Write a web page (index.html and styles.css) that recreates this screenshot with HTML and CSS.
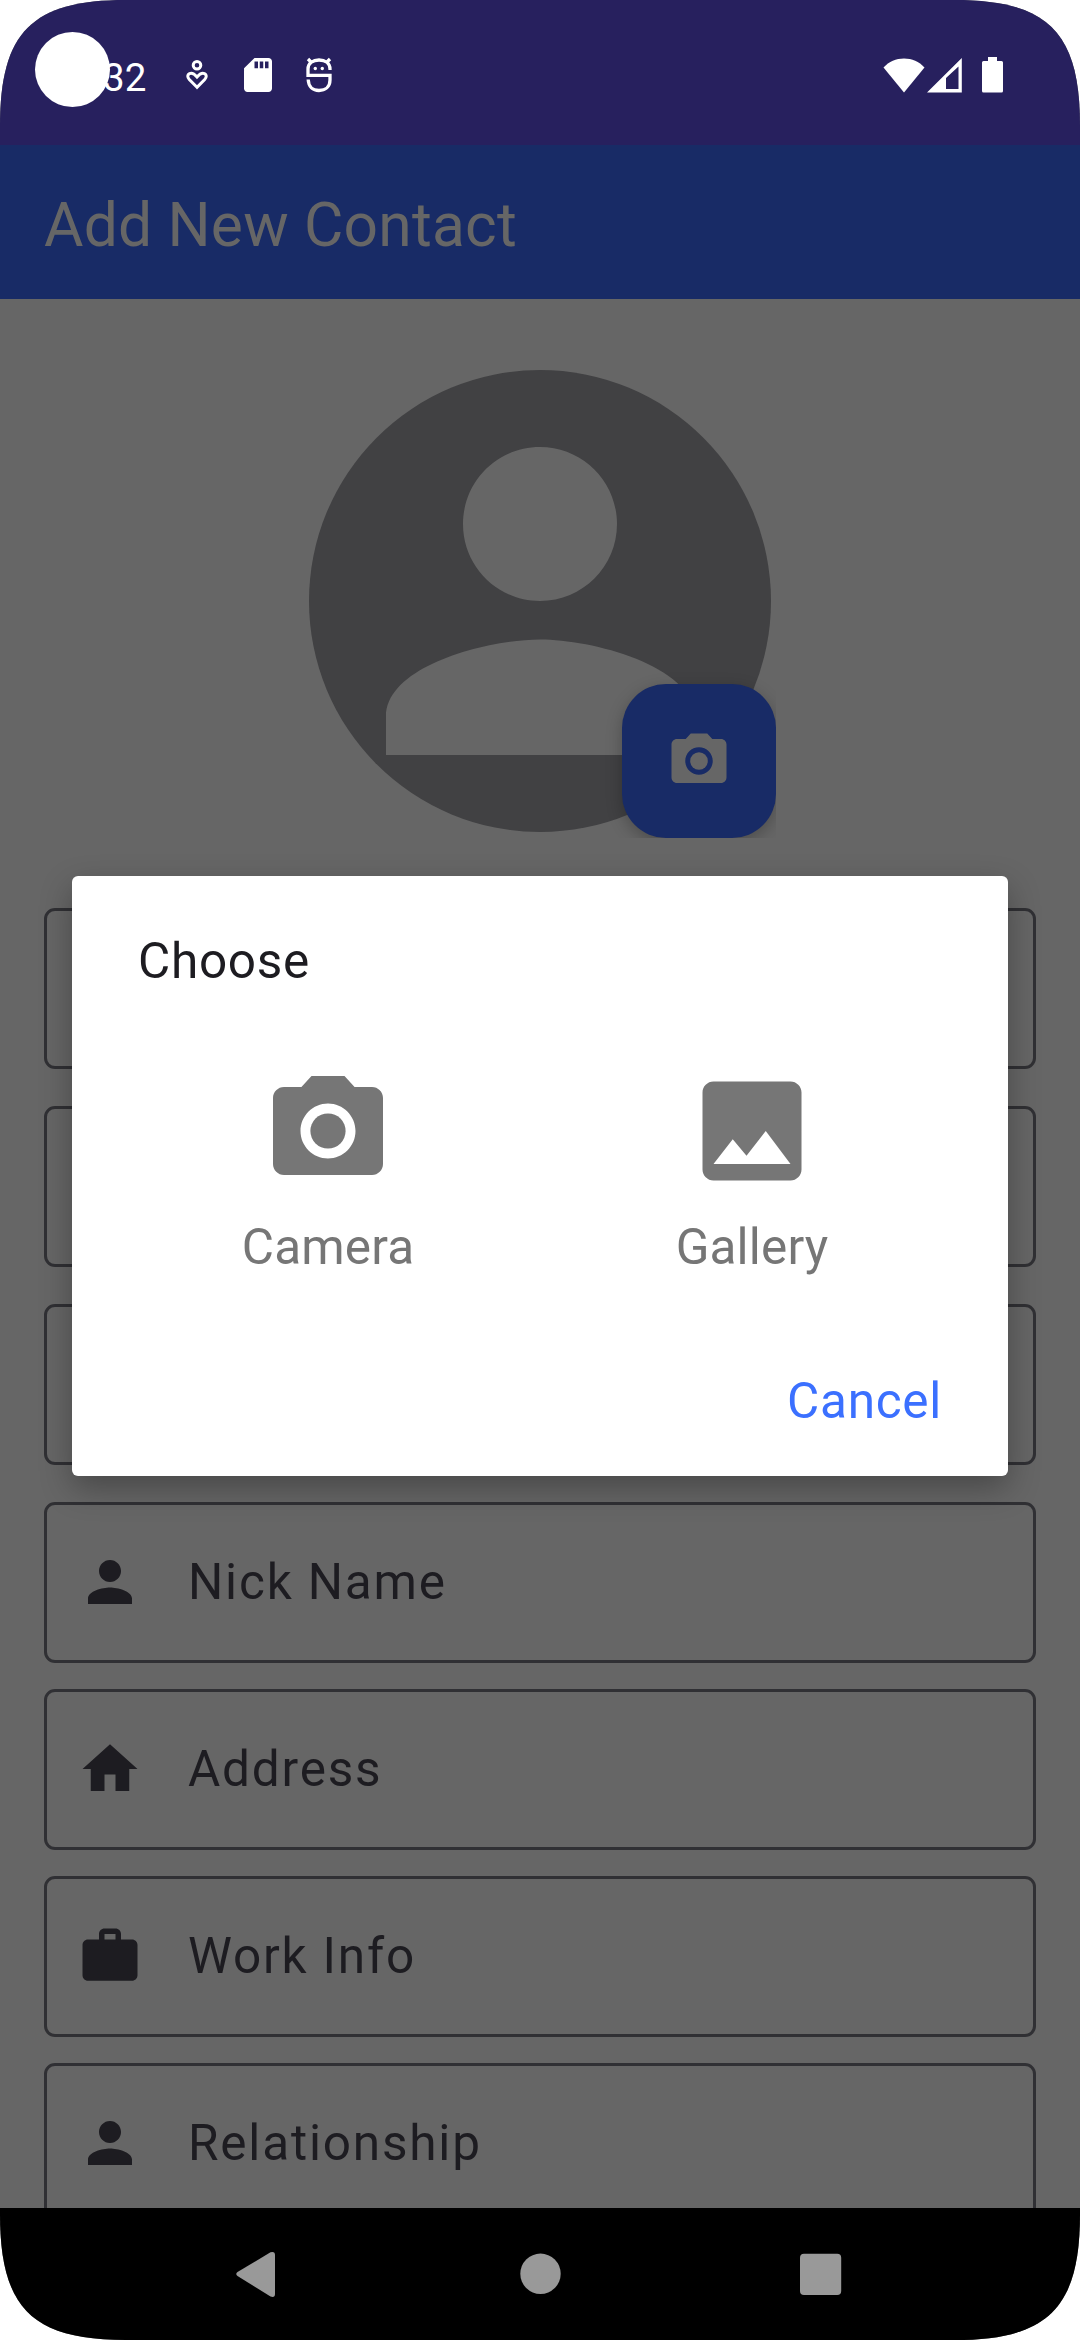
FILE: index.html
```html
<!DOCTYPE html>
<html lang="en">
<head>
<meta charset="utf-8">
<title>Add New Contact</title>
<link rel="stylesheet" href="styles.css">
</head>
<body>
<svg class="defs" aria-hidden="true">
  <symbol id="person" viewBox="0 0 24 24"><path d="M12 12c2.21 0 4-1.79 4-4s-1.79-4-4-4-4 1.79-4 4 1.79 4 4 4zm0 2c-2.67 0-8 1.34-8 4v2h16v-2c0-2.66-5.33-4-8-4z"/></symbol>
  <symbol id="home" viewBox="0 0 24 24"><path d="M10 20v-6h4v6h5v-8h3L12 3 2 12h3v8z"/></symbol>
  <symbol id="work" viewBox="0 0 24 24"><path fill-rule="evenodd" d="M20 6h-4V4c0-1.11-.89-2-2-2h-4c-1.11 0-2 .89-2 2v2H4c-1.11 0-1.99.89-1.99 2L2 19c0 1.11.89 2 2 2h16c1.11 0 2-.89 2-2V8c0-1.11-.89-2-2-2zm-6 0h-4V4h4v2z"/></symbol>
  <symbol id="camera" viewBox="0 0 24 24"><circle cx="12" cy="12" r="3.2"/><path d="M9 2L7.170 4H4c-1.100 0-2 .9-2 2v12c0 1.100.9 2 2 2h16c1.100 0 2-.9 2-2V6c0-1.100-.9-2-2-2h-3.170L15 2H9zm3 15c-2.760 0-5-2.240-5-5s2.240-5 5-5 5 2.240 5 5-2.240 5-5 5z"/></symbol>
  <symbol id="image" viewBox="0 0 24 24"><path d="M21 19V5c0-1.100-.9-2-2-2H5c-1.100 0-2 .9-2 2v14c0 1.100.9 2 2 2h14c1.100 0 2-.9 2-2zM8.500 13.500l2.500 3.010L14.500 12l4.500 6H5l3.500-4.500z"/></symbol>
</svg>
<div class="screen">
  <header class="status-bar">
    <div class="status-left">
      <span class="clock">32</span>
      <svg class="i-heart" viewBox="0 0 22 30"><g fill="none" stroke="#fff" stroke-width="3"><circle cx="11" cy="5.300" r="3.800"/><path d="M11 27.300L3.300 19.500C1.200 17.200 1.200 14.800 3.500 13.600C6.200 12.400 8.500 14 11 17C13.500 14 15.800 12.400 18.500 13.600C20.800 14.800 20.800 17.200 18.700 19.500Z"/></g></svg>
      <svg class="i-sd" viewBox="4 2 16 20" preserveAspectRatio="none"><path fill="#fff" d="M18 2h-8L4.020 8 4 20c0 1.100.9 2 2 2h12c1.100 0 2-.9 2-2V4c0-1.100-.9-2-2-2zm-6 6h-2V4h2v4zm3 0h-2V4h2v4zm3 0h-2V4h2v4z"/></svg>
      <svg class="i-face" viewBox="0 0 26 36"><g fill="none" stroke="#fff" stroke-width="3.300"><path d="M24 13V12C24 6 19 3 13 3S2 6 2 12V18.300H24V23C24 30 19 33.500 13 33.500S2.500 30 2.200 22.500"/><path d="M2 2L5.500 5.500M24 2L20.500 5.500"/></g><circle cx="9.300" cy="11.500" r="1.700" fill="#fff"/><circle cx="16.300" cy="11.500" r="1.700" fill="#fff"/></svg>
    </div>
    <div class="status-right">
      <svg class="i-wifi" viewBox="0 0 42 35"><path fill="#fff" d="M21 34.500L0.500 9.500C6 3.500 13 .5 21 .5S36 3.500 41.500 9.500Z"/></svg>
      <svg class="i-signal" viewBox="0 0 35 35"><path fill="#fff" fill-rule="evenodd" d="M0 34.500L34.800 0V34.500ZM19 20V31H31.500V8.500Z"/></svg>
      <svg class="i-battery" viewBox="0 0 21 36"><path fill="#fff" d="M6 0h9v4h4.500q1.500 0 1.500 1.500v28.500q0 1.500-1.500 1.500h-18q-1.500 0-1.500-1.500V5.500Q0 4 1.500 4H6z"/></svg>
    </div>
    <div class="cutout"></div>
  </header>
  <h1 class="app-bar">Add New Contact</h1>
  <main class="form">
    <div class="photo">
      <div class="avatar"><svg viewBox="0 0 24 24"><use href="#person"/></svg></div>
      <div class="fab"><svg><use href="#camera"/></svg></div>
    </div>
    <div class="fields">
      <div class="field required"></div>
      <div class="field required"></div>
      <div class="field required"></div>
      <div class="field"><svg><use href="#person"/></svg><span>Nick Name</span></div>
      <div class="field"><svg><use href="#home"/></svg><span>Address</span></div>
      <div class="field"><svg><use href="#work"/></svg><span>Work Info</span></div>
      <div class="field"><svg><use href="#person"/></svg><span>Relationship</span></div>
    </div>
  </main>
  <nav class="nav-bar">
    <svg viewBox="3 0 45 45"><path d="M2.500 20Q0 22 2.500 24L35.500 44.500Q40 46 40 42V3Q40-1 35.500 .3Z"/></svg>
    <svg viewBox="0 0 45 45"><circle cx="22.500" cy="21.800" r="20.200"/></svg>
    <svg viewBox="0 0 45 45"><rect x="2" y="1.700" width="41.200" height="41.400" rx="4"/></svg>
  </nav>
  <section class="dialog">
    <h2>Choose</h2>
    <div class="options">
      <div class="option"><svg><use href="#camera"/></svg><span>Camera</span></div>
      <div class="option"><svg><use href="#image"/></svg><span>Gallery</span></div>
    </div>
    <div class="cancel">Cancel</div>
  </section>
</div>
</body>
</html>
```
FILE: styles.css
```css
* { box-sizing: border-box; }
body { margin: 0; background: #fff; font-family: Roboto, sans-serif; }
svg { display: block; flex: none; overflow: visible; }
h1, h2 { margin: 0; font-weight: 400; }
.defs { display: none; }

.screen {
  position: relative;
  display: flex;
  flex-direction: column;
  width: 1080px;
  height: 2340px;
  overflow: hidden;
  background: #666;
  clip-path: path("M0 126C0 32 32 0 126 0H954C1048 0 1080 32 1080 126V2214C1080 2308 1048 2340 954 2340H126C32 2340 0 2308 0 2214Z");
}

.status-bar {
  position: relative;
  flex: none;
  display: flex;
  justify-content: space-between;
  height: 145px;
  padding: 57px 77px 0 103px;
  background: #27205e;
  color: #fff;
}
.status-left, .status-right { display: flex; align-items: flex-start; }
.clock { width: 83px; padding-top: 1px; font-size: 38.500px; line-height: 40px; }
.i-heart { width: 22px; height: 30px; margin-top: 3px; }
.i-sd { width: 28px; height: 34px; margin: 1px 0 0 36px; }
.i-face { width: 26px; height: 36px; margin-left: 34px; }
.i-wifi { width: 42px; height: 35px; margin-top: 1px; }
.i-signal { width: 35px; height: 35px; margin: 1px 0 0 2px; }
.i-battery { width: 21px; height: 36px; margin-left: 20px; }
.cutout {
  position: absolute;
  left: 35px;
  top: 32px;
  width: 75px;
  height: 75px;
  border-radius: 50%;
  background: #fff;
}

.app-bar {
  flex: none;
  height: 154px;
  padding: 2px 44px 0;
  background: #182b66;
  color: #666;
  font-size: 60.500px;
  line-height: 158px;
  letter-spacing: .2px;
}

.form { flex: 1; min-height: 0; overflow: hidden; padding: 71px 44px 0; }
.photo { position: relative; width: 467px; height: 468px; margin-left: 265px; overflow: hidden; }
.avatar { width: 462px; height: 462px; border-radius: 50%; background: #414143; fill: #666; }
.fab {
  position: absolute;
  right: 0;
  bottom: 0;
  display: flex;
  align-items: center;
  justify-content: center;
  width: 154px;
  height: 154px;
  border-radius: 44px;
  background: #182b66;
  fill: #666;
  box-shadow: 0 5px 16px rgba(0, 0, 0, .25);
}
.fab svg { width: 66px; height: 66px; }

.fields { display: flex; flex-direction: column; gap: 26px; padding-top: 70px; }
.field {
  flex: none;
  display: flex;
  align-items: center;
  gap: 45px;
  height: 161px;
  padding: 0 0 1px 30px;
  border: 3px solid #303034;
  border-radius: 11px;
  color: #1d1c21;
  font-size: 49.500px;
  letter-spacing: 1.8px;
}
.field.required { margin-bottom: 11px; }
.field svg { width: 66px; height: 66px; fill: #1d1c21; }

.nav-bar {
  flex: none;
  display: flex;
  justify-content: center;
  gap: 235px;
  height: 132px;
  padding-top: 44px;
  background: #000;
  fill: #999;
}
.nav-bar svg { width: 45px; height: 45px; }

.dialog {
  position: absolute;
  left: 72px;
  top: 876px;
  width: 936px;
  height: 600px;
  padding: 55px 66px 0;
  border-radius: 6px;
  background: #fff;
  color: #1d1c21;
  font-size: 49.500px;
  line-height: 60px;
  letter-spacing: .7px;
  box-shadow: 0 12px 32px rgba(0, 0, 0, .3);
}
.dialog h2 { font-size: inherit; }
.options {
  display: flex;
  justify-content: space-between;
  padding: 74px 44px 0;
  color: #767676;
  fill: #767676;
  letter-spacing: .15px;
}
.option { display: flex; flex-direction: column; align-items: center; gap: 20px; width: 292px; }
.option svg { width: 132px; height: 132px; }
.cancel { margin-top: 94px; text-align: right; color: #3b70ff; }
```
